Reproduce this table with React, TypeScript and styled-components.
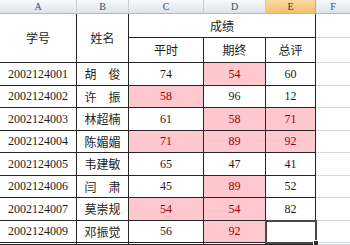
import { FC, Fragment } from 'react';
import styled, { createGlobalStyle } from 'styled-components';

type Row = {
  id: string;
  name: string;
  scores: [string, string, string];
  bad: [boolean, boolean, boolean];
  selected?: boolean;
};

const rows: Row[] = [
  { id: '2002124001', name: '胡　俊', scores: ['74', '54', '60'], bad: [false, true, false] },
  { id: '2002124002', name: '许　振', scores: ['58', '96', '12'], bad: [true, false, false] },
  { id: '2002124003', name: '林超楠', scores: ['61', '58', '71'], bad: [false, true, true] },
  { id: '2002124004', name: '陈媚媚', scores: ['71', '89', '92'], bad: [true, true, true] },
  { id: '2002124005', name: '韦建敏', scores: ['65', '47', '41'], bad: [false, false, false] },
  { id: '2002124006', name: '闫　肃', scores: ['45', '89', '52'], bad: [false, true, false] },
  { id: '2002124007', name: '莫崇规', scores: ['54', '54', '82'], bad: [true, true, false] },
  { id: '2002124009', name: '邓振觉', scores: ['56', '92', ''], bad: [false, true, false], selected: true },
];

const letters = ['A', 'B', 'C', 'D', 'E', 'F'];

const GlobalStyle = createGlobalStyle`
  html, body { margin: 0; padding: 0; background: #fff; }
  body { width: 350px; height: 245px; overflow: hidden; }
`;

const Sheet = styled.div`
  display: grid;
  grid-template-columns: 77px 52px 75px 62px 50px 35px;
  grid-template-rows: 14px 24px 25px repeat(4, 23px 22px) 2px;
  font-family: "Liberation Serif", "Noto Sans CJK SC", serif;
  font-size: 12px;
  color: #1c1c1c;
`;

const ColHead = styled.div<{ $active?: boolean }>`
  display: flex;
  align-items: center;
  justify-content: center;
  font-family: "Liberation Serif", serif;
  font-size: 10px;
  color: ${(p) => (p.$active ? '#4a3a1c' : '#3d4b63')};
  background: ${(p) =>
    p.$active ? 'linear-gradient(#f9dba4, #f2c06c)' : 'linear-gradient(#f8fafc, #dce3ec)'};
  border-right: 1px solid ${(p) => (p.$active ? '#d9a85a' : '#c3ccd9')};
  border-bottom: 1px solid #a9bacd;
`;

const Cell = styled.div<{ $bad?: boolean; $plain?: boolean; $rows?: number; $cols?: number }>`
  display: flex;
  align-items: center;
  justify-content: center;
  grid-row: span ${(p) => p.$rows ?? 1};
  grid-column: span ${(p) => p.$cols ?? 1};
  border-right: 1px solid ${(p) => (p.$plain ? '#d4d9e0' : '#262626')};
  border-bottom: 1px solid ${(p) => (p.$plain ? '#d4d9e0' : '#262626')};
  background: ${(p) => (p.$bad ? '#ffc7ce' : '#fff')};
  color: ${(p) => (p.$bad ? '#9c0006' : '#1c1c1c')};
  white-space: pre;
`;

const SelectedCell = styled(Cell)`
  position: relative;
  z-index: 1;

  &::after {
    content: '';
    position: absolute;
    left: -1px;
    top: -1px;
    right: -2px;
    bottom: -2px;
    border: 2px solid #474747;
  }
`;

const FillHandle = styled.span`
  position: absolute;
  right: -4px;
  bottom: -4px;
  width: 4px;
  height: 4px;
  background: #303030;
  border: 1px solid #fff;
  z-index: 2;
`;

const App: FC = () => {
  return (
    <>
      <GlobalStyle />
      <Sheet>
        {/* Column letters */}
        {letters.map((l) => (
          <ColHead key={l} $active={l === 'E'}>
            {l}
          </ColHead>
        ))}

        {/* Two-line table head */}
        <Cell $rows={2}>学号</Cell>
        <Cell $rows={2}>姓名</Cell>
        <Cell $cols={3}>成绩</Cell>
        <Cell $plain />
        <Cell>平时</Cell>
        <Cell>期终</Cell>
        <Cell>总评</Cell>
        <Cell $plain />

        {/* Students */}
        {rows.map((r) => (
          <Fragment key={r.id}>
            <Cell>{r.id}</Cell>
            <Cell>{r.name}</Cell>
            <Cell $bad={r.bad[0]}>{r.scores[0]}</Cell>
            <Cell $bad={r.bad[1]}>{r.scores[1]}</Cell>
            {r.selected ? (
              <SelectedCell>
                {r.scores[2]}
                <FillHandle />
              </SelectedCell>
            ) : (
              <Cell $bad={r.bad[2]}>{r.scores[2]}</Cell>
            )}
            <Cell $plain />
          </Fragment>
        ))}

        {/* Next row, cut off by the window */}
        <Cell />
        <Cell />
        <Cell />
        <Cell />
        <Cell />
        <Cell $plain />
      </Sheet>
    </>
  );
};

export default App;
